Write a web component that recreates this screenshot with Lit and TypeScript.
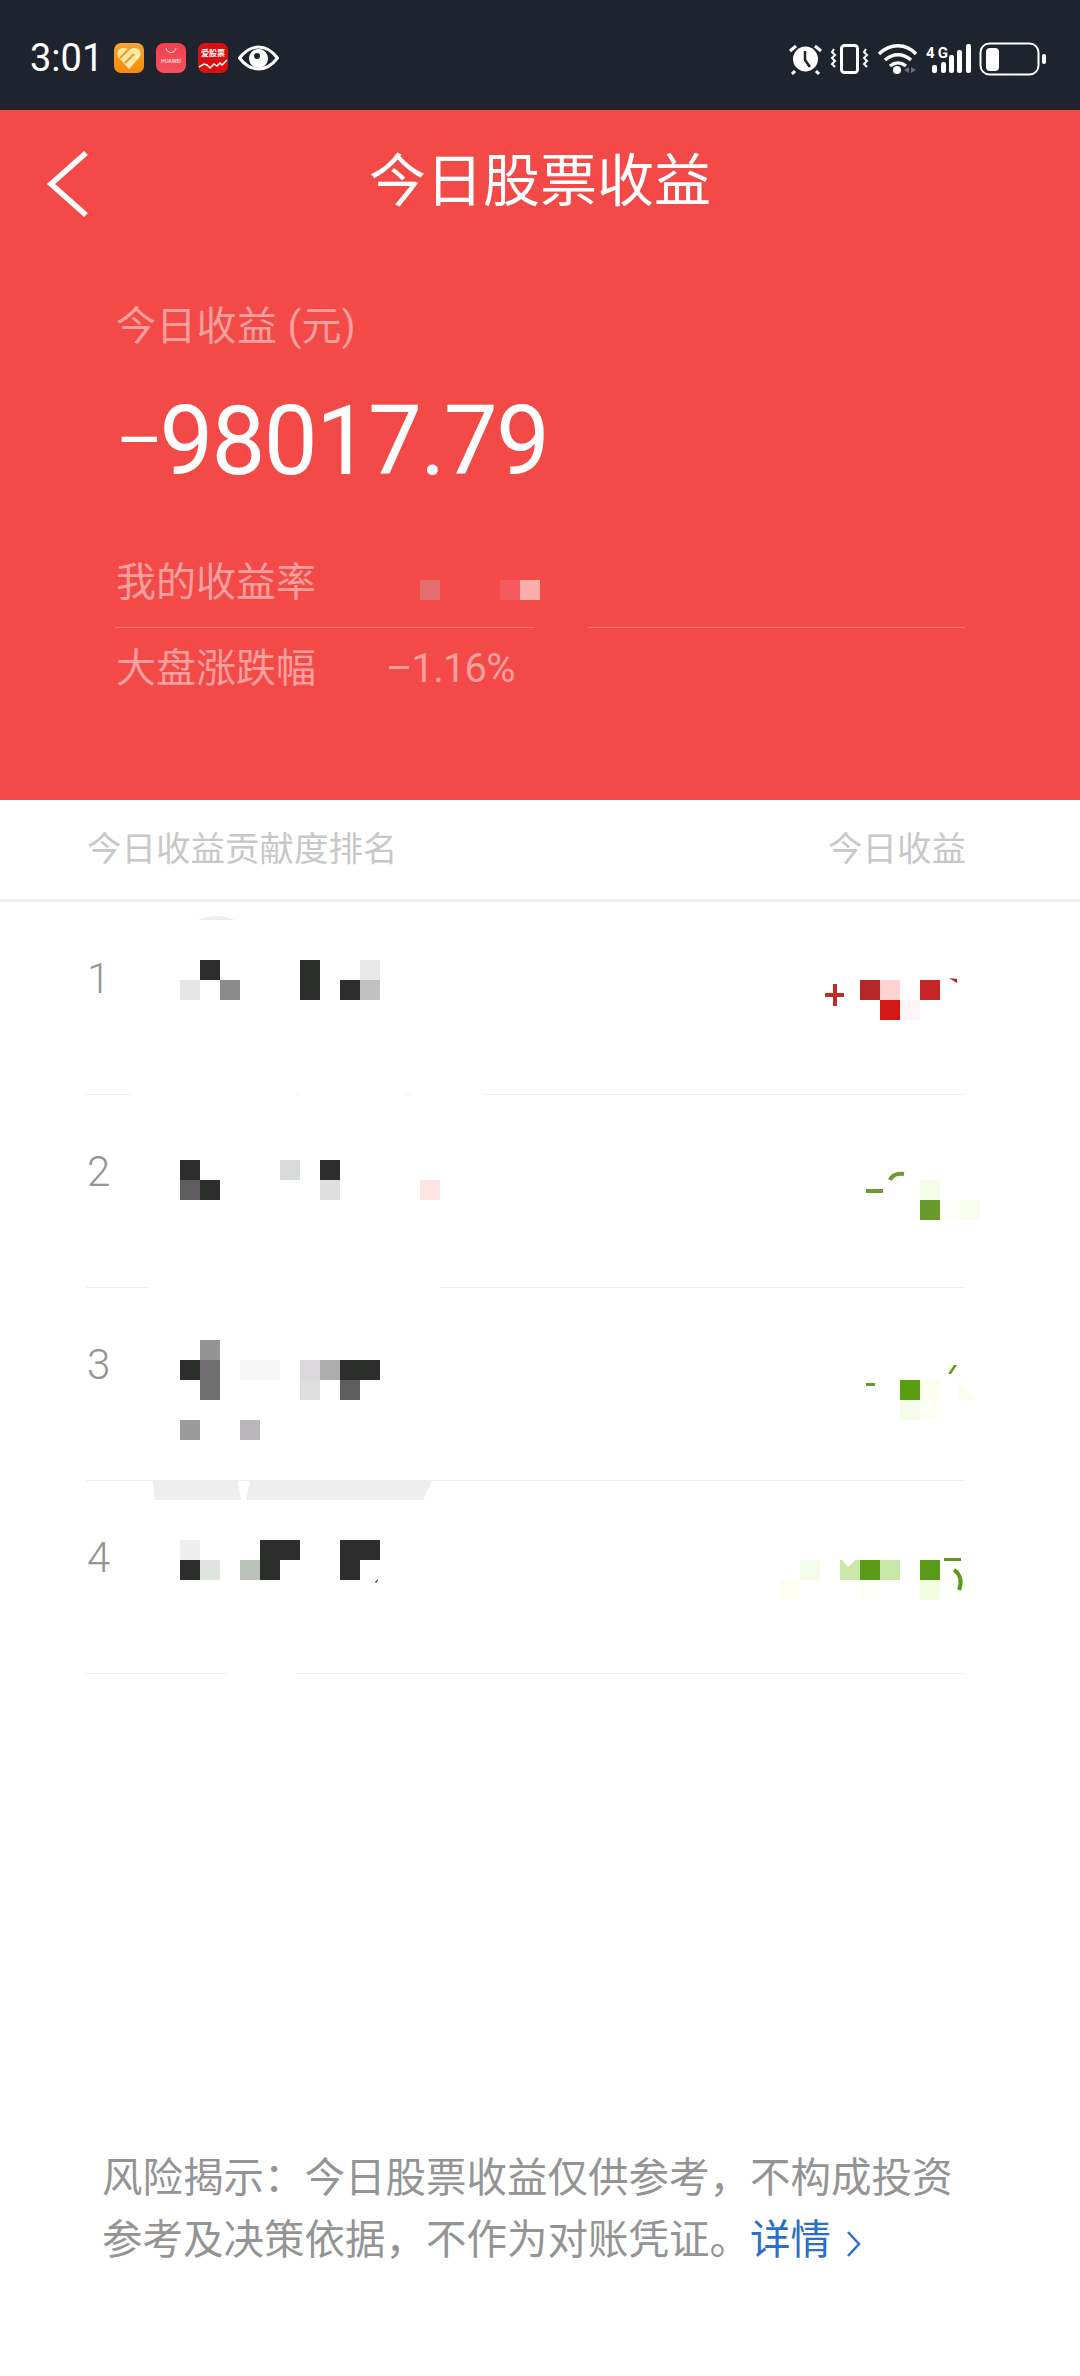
import { LitElement, html, css, svg } from "lit";
import { customElement } from "lit/decorators.js";

type R = [number, number, number, number, string];
const D = "#2c2e2c";
const FOOT = "\u98CE\u9669\u63ED\u793A\uFF1A\u4ECA\u65E5\u80A1\u7968\u6536\u76CA\u4EC5\u4F9B\u53C2\u8003\uFF0C\u4E0D\u6784\u6210\u6295\u8D44\u53C2\u8003\u53CA\u51B3\u7B56\u4F9D\u636E\uFF0C\u4E0D\u4F5C\u4E3A\u5BF9\u8D26\u51ED\u8BC1\u3002";
const cells: R[] = [
  // row 1
  [200,960,20,20,D],[180,980,20,20,"#e5e5e5"],[220,980,20,20,"#8c8a8c"],[300,960,20,40,D],[340,980,20,20,D],[360,960,20,20,"#e6e9e6"],[360,980,20,20,"#c2c0c2"],
  [860,980,20,20,"#b72626"],[880,980,20,20,"#ffd3d0"],[880,1000,20,20,"#d31818"],[900,1000,20,20,"#fff5f5"],[920,980,20,20,"#c62626"],
  [825,993,19,4,"#c12a2a"],[833,984,4,22,"#c12a2a"],
  // row 2
  [180,1160,20,20,D],[180,1180,20,20,"#605e60"],[200,1180,20,20,D],[280,1160,20,20,"#d8dcd8"],[320,1160,20,20,D],[320,1180,20,20,"#dfdfdf"],[420,1180,20,20,"#fde5e5"],
  [920,1180,20,20,"#f5fde8"],[920,1200,20,20,"#689a2c"],[940,1200,20,20,"#fdfef8"],[960,1200,20,20,"#f6fdea"],[866,1189,17,4,"#6b9a2e"],
  // row 3
  [200,1340,20,20,"#959395"],[180,1360,20,20,D],[200,1360,20,40,"#716f71"],[240,1360,40,20,"#f7f7f7"],[300,1360,20,20,"#dbd9db"],[320,1360,20,20,"#adadad"],[340,1360,40,20,D],[300,1380,20,20,"#dededf"],[340,1380,20,20,"#5c5e5c"],[180,1420,20,20,"#9c9a9c"],[240,1420,20,20,"#b9b7b9"],
  [900,1380,20,20,"#5a9e10"],[920,1380,20,20,"#fdfeee"],[900,1400,20,20,"#f5fdea"],[920,1400,20,20,"#fdfef4"],[866,1383,9,3,"#5f9a2a"],
  // row 4
  [180,1540,20,20,"#eeeeee"],[180,1560,20,20,D],[200,1560,20,20,"#dfe4df"],[240,1560,20,20,"#bbc2bb"],[260,1540,40,20,D],[260,1560,20,20,D],[340,1540,40,20,D],[340,1560,20,20,D],
  [800,1560,20,20,"#f4fdea"],[780,1580,20,20,"#fdfef0"],[840,1560,20,20,"#cbe8ac"],[860,1560,20,20,"#5a9a18"],[880,1560,20,20,"#c8e8a8"],[920,1560,20,20,"#5a9a18"],[920,1580,20,20,"#f4fde0"],[860,1580,20,20,"#fdfef5"],[944,1558,17,3,"#5a9a18"],
  // white patches over the row rules
  [131,1092,166,4,"#fff"],[300,1092,105,4,"#fff"],[410,1092,73,4,"#fff"],[148,1285,292,4,"#fff"],[227,1670,70,5,"#fff"],
];
const polys: [string, string][] = [
  ["153,1481 238,1481 241,1500 155,1500", "#eeeeee"],
  ["250,1481 432,1481 423,1500 246,1500", "#eeeeee"],
  ["949,978 957,979 957,983", "#b72020"],
  ["948,1374 954,1365 957,1365 951,1374", "#5a9a18"],
  ["959,1380 977,1400 959,1400", "#fdfeee"],
  ["375,1582 378,1579 378,1580 376,1583", D],
  ["842,1560 855,1560 848,1567", "#ffffff"],
];

@customElement("app-root")
export class AppRoot extends LitElement {
  static styles = css`
    :host { display: flex; flex-direction: column; width: 1080px; height: 2376px; background: #fff; position: relative; overflow: hidden;
      font-family: Roboto, "Noto Sans CJK SC", sans-serif; }
    .status { height: 110px; background: #1f232e; display: flex; align-items: center; padding: 6px 0 0 30px; box-sizing: border-box; flex: none; color: #fff; }
    .time { font-size: 38px; width: 84px; line-height: 46px; }
    .apps { display: flex; gap: 12px; align-items: center; }
    .app { width: 30px; height: 30px; display: block; }
    .eye { width: 41px; height: 26px; display: block; margin-left: -2px; }
    .right { margin-left: auto; display: block; width: 300px; height: 110px; margin-top: -6px; flex: none; }
    .hero { background: #f34a48; height: 690px; flex: none; display: flex; flex-direction: column; box-sizing: border-box; position: relative; }
    .nav { height: 150px; display: flex; align-items: center; justify-content: center; position: relative; }
    .nav svg { position: absolute; left: 44px; top: 38px; width: 46px; height: 70px; }
    .title { color: #fff; font-size: 57px; line-height: 70px; margin-top: -6px; }
    .body { padding: 0 115px 0 116px; }
    .cap { color: #fb9f9e; font-size: 40px; line-height: 50px; margin-top: 42px; letter-spacing: 0.3px; }
    .amount { color: #fff; font-size: 96px; line-height: 110px; margin-top: 34px; letter-spacing: -1.8px; }
    .minus { font-size: 72px; vertical-align: 9px; margin-right: -2px; }
    .stat { color: #fb9f9e; font-size: 40px; line-height: 50px; display: flex; }
    .stat .k { width: 270px; }
    .stat .v { letter-spacing: -0.8px; }
    .stat.first { margin-top: 62px; padding-bottom: 19px; border-bottom: 1px solid #f76f6e; margin-left: -1px; padding-left: 1px; }
    .stat.second { margin-top: 16px; }
    .blot { position: absolute; left: 0; top: 0; width: 1080px; height: 690px; pointer-events: none; }
    .thead { height: 91px; padding: 0 114px 8px 87px; flex: none; display: flex; justify-content: space-between; align-items: center; font-size: 34.5px; color: #c8c8c8; border-bottom: 3px solid #eeeeee; box-sizing: content-box; }
    .list { position: relative; padding: 0 115px 0 86px; flex: none; }
    .row { height: 192px; border-bottom: 1px solid #eeeeee; box-sizing: content-box; font-size: 42px; font-weight: 300; color: #949494; line-height: 50px; padding-left: 1px; }
    .row span { display: block; padding-top: 52px; }
    .censor { position: absolute; left: 0; top: 0; width: 1080px; height: 775px; pointer-events: none; }
    .foot { margin-top: auto; padding: 0 0 108px 102px; font-size: 40.5px; line-height: 62px; color: #949494; width: 860px; box-sizing: content-box; font-family: "Noto Sans CJK SC", sans-serif; }
    .foot a { color: #2a6fc9; text-decoration: none; }
    .foot svg { width: 16px; height: 28px; margin-left: 15px; vertical-align: -4px; }
  `;

  render() {
    return html`
      <div class="status">
        <div class="time">3:01</div>
        <div class="apps">
          <svg class="app" viewBox="0 0 30 30"><defs><linearGradient id="o" x1="0" y1="0" x2="0" y2="1"><stop offset="0" stop-color="#f7a332"/><stop offset="1" stop-color="#fb8a04"/></linearGradient></defs><rect width="30" height="30" rx="7" fill="url(#o)"/><path d="M15 26L5 15c-4-5 0-11 5-10 2 0 4 1 5 3 1-2 3-3 5-3 5-1 9 5 5 10z" fill="#fde9a8"/><path d="M6 15l8-8M11 20l9-9" fill="none" stroke="#f79a1e" stroke-width="2.200"/></svg>
          <svg class="app" viewBox="0 0 30 30"><defs><linearGradient id="h" x1="0" y1="0" x2="0" y2="1"><stop offset="0" stop-color="#f0404e"/><stop offset="1" stop-color="#f8505e"/></linearGradient></defs><rect width="30" height="30" rx="8" fill="url(#h)"/><path d="M10 5c1 6 9 6 10 0" fill="none" stroke="#fff" stroke-width=".8"/><text x="15" y="20" text-anchor="middle" font-size="5.400" fill="#fff" font-family="Roboto">HUAWEI</text></svg>
          <svg class="app" viewBox="0 0 30 30"><rect width="30" height="30" rx="7" fill="#dc0f10"/><text x="15" y="13" text-anchor="middle" font-size="8" fill="#fff" font-family="Noto Sans CJK SC" font-weight="700">爱股票</text><path d="M1 24l5-3 3 1 3 3 4-4 3 2 3-3 2 2 5-5" fill="none" stroke="#fff" stroke-width="1.500"/></svg>
          <svg class="eye" viewBox="0 0 41 26"><path d="M1.500 13C8 4.500 14 2 20.500 2S33 4.500 39.500 13C33 21.500 27 24 20.500 24S8 21.500 1.500 13z" fill="none" stroke="#fff" stroke-width="3"/><path fill-rule="evenodd" d="M20.500 4a9.500 9.500 0 1 1-.01 0zM16 11a3 3 0 1 0 6 0 3 3 0 1 0-6 0z" fill="#fff"/></svg>
        </div>
        <svg class="right" viewBox="780 0 300 110">
          <g fill="none" stroke="#fff" stroke-width="2.500">
            <circle cx="805.500" cy="59" r="12.500" fill="#fff" stroke="none"/>
            <path d="M790 51l6-5M821 51l-6-5M795 71l-3 3M816 71l3 3" stroke-width="3"/>
            <path d="M805 51v9l5 7" stroke="#1f232e"/>
            <rect x="841.500" y="45.500" width="16" height="27" rx="3" stroke-width="3"/>
            <path d="M834 49l-2 3 3 3-3 3 3 3-3 3 3 3M866 49l-2 3 3 3-3 3 3 3-3 3 3 3" stroke-width="2"/>
            <path d="M879 54c11-11 27-11 37 0M885 60c8-7 18-7 26 0M890 66c5-4 11-4 16 0" stroke-width="3.500"/>
            <rect x="980.500" y="43.500" width="58" height="31" rx="9" stroke-width="2"/>
          </g>
          <circle cx="897" cy="70" r="4" fill="#fff"/>
          <path d="M904 70l5-3v6zM916 70l-5-3v6z" fill="#6d7079"/>
          <text x="926" y="58" font-size="15" font-weight="700" fill="#fff" font-family="Roboto" textLength="22">4G</text>
          <g fill="#fff">
            <rect x="932" y="65" width="5" height="8" rx="2"/><rect x="941" y="62" width="5" height="11" rx="2"/><rect x="949" y="55" width="5" height="18" rx="2"/><rect x="957" y="50" width="5" height="23" rx="2"/><rect x="966" y="44" width="5" height="29" rx="2"/>
            <rect x="986" y="48" width="13" height="23" rx="4"/><rect x="1042" y="54" width="4" height="10" rx="2"/>
          </g>
        </svg>
      </div>
      <div class="hero">
        <div class="nav">
          <svg viewBox="44 148 46 70"><path d="M86 153L51 184l35 31" fill="none" stroke="#fff" stroke-width="5.500"/></svg>
          <div class="title">今日股票收益</div>
        </div>
        <div class="body">
          <div class="cap">今日收益 (元)</div>
          <div class="amount"><span class="minus">–</span>98017.79</div>
          <div class="stat first"><span class="k">我的收益率</span></div>
          <div class="stat second"><span class="k">大盘涨跌幅</span><span class="v">–1.16%</span></div>
        </div>
        <svg class="blot" viewBox="0 110 1080 690">
          <ellipse cx="480" cy="570" rx="110" ry="50" fill="#f44b49"/>
          <rect x="535" y="620" width="53" height="12" fill="#f34a48"/>
          <rect x="420" y="580" width="20" height="20" fill="#e36e6e"/>
          <rect x="500" y="580" width="20" height="20" fill="#f45a5e"/>
          <rect x="520" y="580" width="20" height="20" fill="#faadad"/>
        </svg>
      </div>
      <div class="thead"><span>今日收益贡献度排名</span><span>今日收益</span></div>
      <div class="list">
        ${[1, 2, 3, 4].map((n) => html`<div class="row"><span>${n}</span></div>`)}
        <svg class="censor" viewBox="0 902 1080 775">
          ${cells.map(([x, y, w, h, c]) => svg`<rect x=${x} y=${y} width=${w} height=${h} fill=${c}></rect>`)}
          ${polys.map(([p, c]) => svg`<polygon points=${p} fill=${c}></polygon>`)}
          <path d="M198 920q18-8 37 0z" fill="#eee"/>
          <path d="M890 1180c2-5 8-7 14-6" fill="none" stroke="#6b9a2e" stroke-width="4"/>
          <path d="M954 1570c7 4 8 13 5 20" fill="none" stroke="#5a9a18" stroke-width="4"/>
        </svg>
      </div>
      <div class="foot">${FOOT}<a>详情<svg viewBox="0 0 16 28"><path d="M2 2l11 12L2 26" fill="none" stroke="#2a6fc9" stroke-width="2.500"/></svg></a></div>
    `;
  }
}
